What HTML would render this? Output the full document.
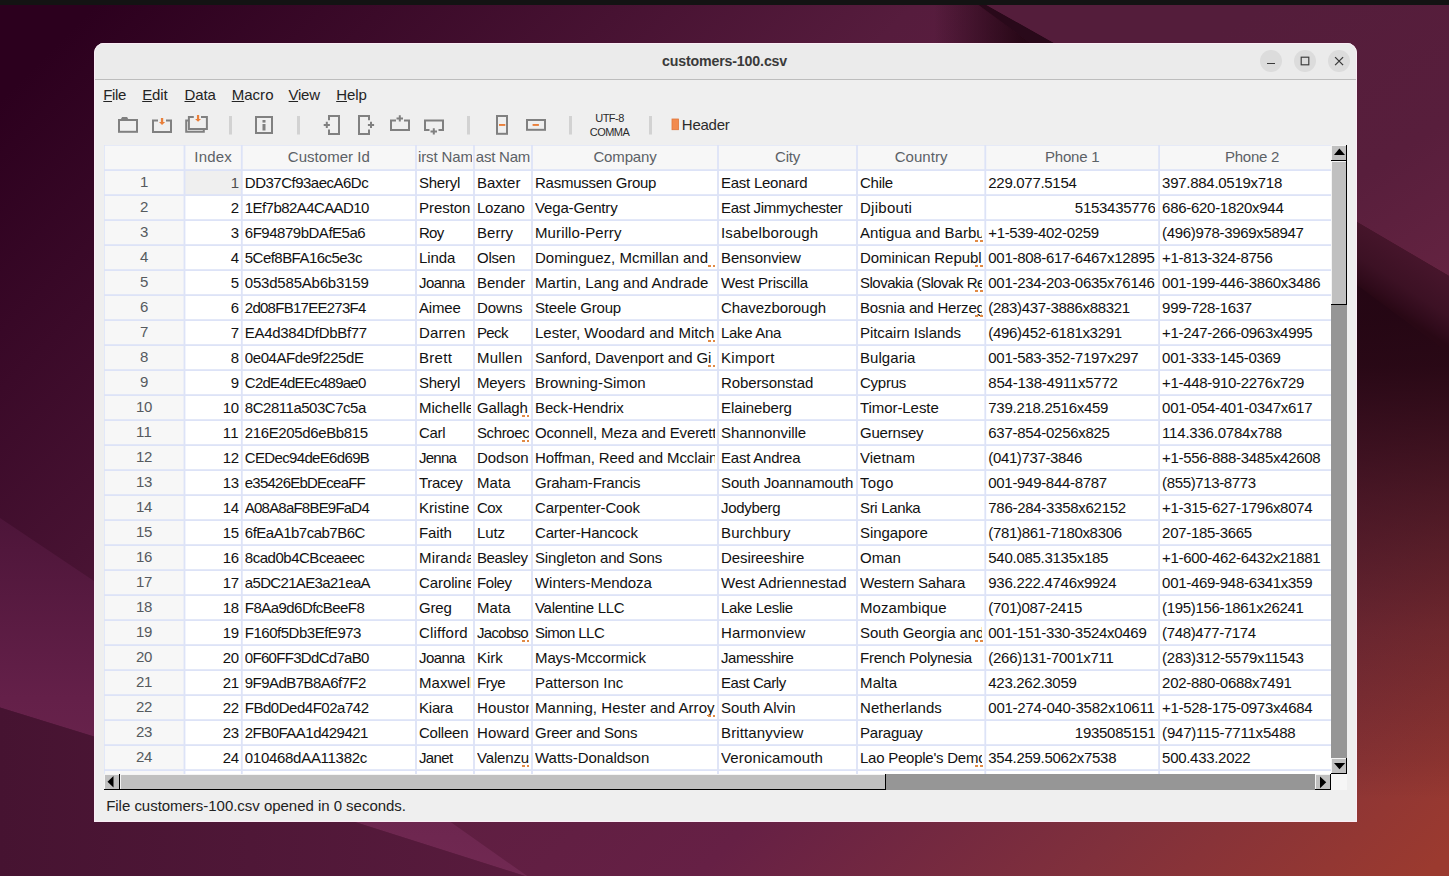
<!DOCTYPE html>
<html><head><meta charset="utf-8"><title>customers-100.csv</title>
<style>
html,body{margin:0;padding:0}
body{width:1449px;height:876px;overflow:hidden;position:relative;background:#3a0b29;font-family:"Liberation Sans",sans-serif;font-size:15px;color:#1a1a1a}
.abs{position:absolute}
#wall{position:absolute;left:0;top:0}
#topbar{position:absolute;left:0;top:0;width:1449px;height:5px;background:#131313}
#win{position:absolute;left:94px;top:43px;width:1263px;height:779px;background:#efefef;border-radius:10px 10px 0 0;overflow:hidden}
#title{position:absolute;left:0;top:0;width:1263px;height:35px;background:#ebebeb;border-bottom:1px solid #bdbdbd;border-top:1px solid #ebebeb;box-sizing:content-box}
#title .t{position:absolute;left:-1px;width:1263px;top:6.6px;text-align:center;font-weight:bold;font-size:14.2px;line-height:20px;color:#3a3a3a;letter-spacing:-0.15px}
.wb{position:absolute;top:6px;width:22px;height:22px;border-radius:11px;background:#dcdcdc}
.menu{position:absolute;top:41px;height:22px;line-height:22px;font-size:15px;color:#242424;white-space:pre}
.menu u{text-decoration:underline;text-underline-offset:1.3px;text-decoration-thickness:1px}
#tb{position:absolute;left:0;top:0}
.tl{position:absolute;color:#2b2b2b;white-space:pre}
#grid{position:absolute;left:10px;top:102px;width:1227px;height:629px;background:#fff;overflow:hidden}
.c{position:absolute;height:25px;line-height:25px;white-space:pre;overflow:hidden;color:#111}
.h{position:absolute;top:-1px;height:25px;line-height:25px;white-space:pre;overflow:hidden;color:#5c6166;text-align:center}
.rn{color:#555a5e;text-align:center}
.r{text-align:right}
#status{position:absolute;left:12.2px;top:753.2px;font-size:15px;line-height:20px;color:#222;white-space:pre}
</style></head><body>

<svg id="wall" width="1449" height="876" viewBox="0 0 1449 876">
<defs>
<linearGradient id="gb" gradientUnits="userSpaceOnUse" x1="0" y1="0" x2="1150" y2="1150">
<stop offset="0.043" stop-color="#2c001e"/><stop offset="0.40" stop-color="#561c3d"/><stop offset="0.684" stop-color="#662045"/><stop offset="0.848" stop-color="#80303c"/><stop offset="1" stop-color="#9b3a2f"/>
</linearGradient>
<linearGradient id="gT" gradientUnits="userSpaceOnUse" x1="1270" y1="0" x2="1449" y2="276">
<stop offset="0" stop-color="#541d3b"/><stop offset="0.6" stop-color="#581e3c"/><stop offset="1" stop-color="#642341"/>
</linearGradient>
<linearGradient id="gW" gradientUnits="userSpaceOnUse" x1="1400" y1="247" x2="1369" y2="294">
<stop offset="0" stop-color="#46152b"/><stop offset="0.55" stop-color="#3c1124"/><stop offset="0.85" stop-color="#300b1b"/><stop offset="1" stop-color="#290815"/>
</linearGradient>
<linearGradient id="gD" gradientUnits="userSpaceOnUse" x1="1400" y1="317" x2="1400" y2="800">
<stop offset="0" stop-color="#1f0410" stop-opacity="0.92"/><stop offset="0.10" stop-color="#1f0410" stop-opacity="0.88"/><stop offset="0.37" stop-color="#1f0410" stop-opacity="0.55"/><stop offset="0.646" stop-color="#1f0410" stop-opacity="0.26"/><stop offset="0.917" stop-color="#1f0410" stop-opacity="0.08"/><stop offset="1" stop-color="#1f0410" stop-opacity="0"/>
</linearGradient>
<linearGradient id="gDt" gradientUnits="userSpaceOnUse" x1="1022" y1="24" x2="934" y2="24">
<stop offset="0" stop-color="#1f0410" stop-opacity="0.85"/><stop offset="1" stop-color="#1f0410" stop-opacity="0"/>
</linearGradient>
<linearGradient id="gL" gradientUnits="userSpaceOnUse" x1="0" y1="518" x2="0" y2="878">
<stop offset="0" stop-color="#4d1539"/><stop offset="0.5" stop-color="#642049"/><stop offset="1" stop-color="#712952"/>
</linearGradient>
<linearGradient id="gA" gradientUnits="userSpaceOnUse" x1="0" y1="0" x2="500" y2="0">
<stop offset="0" stop-color="#461331"/><stop offset="1" stop-color="#581b3d"/>
</linearGradient>
</defs>
<rect width="1449" height="876" fill="url(#gb)"/>
<!-- dark fade left of edge 2 in top strip -->
<polygon points="900,0 974,0 1034,44 900,44" fill="url(#gDt)"/>
<!-- dark fade below edge 2 on right side -->
<polygon points="1340,268 1449,349 1449,876 1340,876" fill="url(#gD)"/>
<!-- wedge between edges -->
<polygon points="977.6,0 1054,43 1357,221.5 1449,275.5 1449,353 1357,285 972,0" fill="url(#gW)"/>
<polygon points="977.6,0 1054,43 1056,44.500 1032,44.500 972,0" fill="#29091a"/>
<!-- region above edge 1 -->
<polygon points="977.6,0 1449,0 1449,275.5 1357,221.5 1054,43" fill="url(#gT)"/>
<!-- light band lower-left -->
<polygon points="0,518 94,581 452,823 530,878 525,876 355,822 94,736.5 0,707.5" fill="url(#gL)"/>
<!-- below edge A -->
<polygon points="0,707.5 94,736.5 355,822 525,876 0,876" fill="url(#gA)"/>
</svg>
<div id="topbar"></div>

<div id="win">
<div id="title"><div class="t">customers-100.csv</div>
<div class="wb" style="left:1166px"></div>
<div class="wb" style="left:1200px"></div>
<div class="wb" style="left:1234px"></div>
<svg class="abs" style="left:1166px;top:6px" width="90" height="22" viewBox="0 0 90 22">
<path d="M7 13.500h8" stroke="#3a3a3a" stroke-width="1.1" fill="none"/>
<rect x="41.200" y="7.200" width="7.600" height="7.600" stroke="#3a3a3a" stroke-width="1.15" fill="none"/>
<path d="M75.100 7.100l8 8M83.100 7.100l-8 8" stroke="#3a3a3a" stroke-width="1.25" fill="none"/>
</svg>
</div>
<div class="menu" style="left:9.3px;letter-spacing:-0.406px"><u>F</u>ile</div>
<div class="menu" style="left:48.2px;letter-spacing:-0.155px"><u>E</u>dit</div>
<div class="menu" style="left:90.5px;letter-spacing:-0.121px"><u>D</u>ata</div>
<div class="menu" style="left:137.7px;letter-spacing:0.027px"><u>M</u>acro</div>
<div class="menu" style="left:194.6px;letter-spacing:-0.279px"><u>V</u>iew</div>
<div class="menu" style="left:242.2px;letter-spacing:-0.037px"><u>H</u>elp</div>
<svg id="tb" width="1263" height="110" viewBox="94 43 1263 110">
<g fill="none" stroke="#808080" stroke-width="2" stroke-linejoin="miter">
<!-- open folder -->
<rect x="119" y="120" width="18" height="11.800"/>
<!-- save -->
<path d="M158 120.5h-5V132h18v-11.500h-5"/>
<!-- save all -->
<path d="M193.800 117.100h-4.900V129h18v-11.900H201"/>
<path d="M188.500 120.400h-2.300V131.800h17.600V129.500"/>
<!-- info -->
<rect x="256" y="117" width="16" height="16"/>
<!-- insert col left -->
<path d="M329 120.300v-4.300h10v18h-10v-4.500"/>
<!-- insert col right -->
<path d="M369 120.300v-4.300h-10v18h10v-4.500"/>
<!-- insert row above -->
<path d="M396 120.500h-5v9.500h18v-9.500h-5"/>
<!-- insert row below -->
<path d="M429.500 130h-4.500v-9.500h18V130h-4.500"/>
<!-- delete col -->
<rect x="497" y="116" width="10" height="17.800"/>
<!-- delete row -->
<rect x="527" y="120" width="18" height="9.800"/>
</g>
<g stroke="#808080" stroke-width="2" fill="none">
<path d="M323.700 124.900h6.200M326.800 121.800v6.200"/>
<path d="M367.900 124.900h6.200M371 121.800v6.200"/>
<path d="M396.500 118.500h6.500M399.800 115.200v6.400"/>
<path d="M430.500 131.500h6.500M433.800 128.200v6.400"/>
</g>
<g fill="#808080"><path d="M120.400 119.700l1.700-2.800h5l1.500 2.800z"/><rect x="262.500" y="120" width="3" height="2.600"/><rect x="262.500" y="124" width="3" height="6.500"/></g>
<g fill="#e97f3a">
<path d="M160.900 117.900h2.300v4.100h1.900l-3.050 2.900-3.050-2.900h1.900z"/>
<path d="M196.950 115h2.200v4h1.900l-3 2.800-3-2.800h1.900z"/>
<rect x="499" y="124" width="6.300" height="1.900"/>
<rect x="532.600" y="124" width="6.300" height="1.900"/>
</g>
<g fill="#d2d2d2">
<rect x="229" y="116" width="3" height="18.500"/><rect x="297" y="116" width="3" height="18.500"/><rect x="467" y="116" width="3" height="18.500"/><rect x="569" y="116" width="3" height="18.500"/><rect x="649" y="116" width="3" height="18.500"/>
</g>
<rect x="672" y="119" width="6.500" height="10.700" fill="#f28a4e" stroke="#e0763a" stroke-width="0.8"/>
</svg>
<div class="tl" style="left:475.5px;top:68px;width:80px;text-align:center;font-size:11px;line-height:14px;letter-spacing:-0.55px">UTF-8
COMMA</div>
<div class="tl" style="left:587.8px;top:71.5px;font-size:15px;line-height:20px;letter-spacing:-0.247px">Header</div>
<div id="grid">
<div class="abs" style="left:0;top:0;width:1227px;height:25px;background:#f7f7f7"></div>
<div class="abs" style="left:0;top:0;width:80px;height:650px;background:#f7f7f7"></div>
<div class="abs" style="left:81px;top:26px;width:56px;height:24px;background:#efefef"></div>
<div class="h" style="left:82.3px;width:53.7px"><span style="display:inline-block;margin:0 -40px;letter-spacing:0.175px">Index</span></div>
<div class="h" style="left:139.6px;width:170.6px"><span style="display:inline-block;margin:0 -40px;letter-spacing:0.034px">Customer Id</span></div>
<div class="h" style="left:313.8px;width:54.4px"><span style="display:inline-block;margin:0 -40px;letter-spacing:-0.129px">First Name</span></div>
<div class="h" style="left:371.8px;width:54.4px"><span style="display:inline-block;margin:0 -40px;letter-spacing:-0.22px">Last Name</span></div>
<div class="h" style="left:429.8px;width:182.4px"><span style="display:inline-block;margin:0 -40px;letter-spacing:-0.156px">Company</span></div>
<div class="h" style="left:615.8px;width:135.4px"><span style="display:inline-block;margin:0 -40px;letter-spacing:-0.253px">City</span></div>
<div class="h" style="left:754.8px;width:124.7px"><span style="display:inline-block;margin:0 -40px;letter-spacing:0.063px">Country</span></div>
<div class="h" style="left:883.1px;width:170.2px"><span style="display:inline-block;margin:0 -40px;letter-spacing:-0.245px">Phone 1</span></div>
<div class="h" style="left:1056.9px;width:182.3px"><span style="display:inline-block;margin:0 -40px;letter-spacing:-0.245px">Phone 2</span></div>
<div class="c rn" style="left:0;width:80px;top:23.5px;letter-spacing:-0.279px">1</div>
<div class="c r" style="left:81.5px;width:53.4px;top:24.5px;letter-spacing:-0.279px;color:#4f4f4f">1</div>
<div class="c" style="left:140.8px;width:168.2px;top:24.5px;letter-spacing:-0.502px">DD37Cf93aecA6Dc</div>
<div class="c" style="left:315.0px;width:52.0px;top:24.5px;letter-spacing:-0.245px">Sheryl</div>
<div class="c" style="left:373.0px;width:52.0px;top:24.5px;letter-spacing:0.007px">Baxter</div>
<div class="c" style="left:431.0px;width:180.0px;top:24.5px;letter-spacing:-0.259px">Rasmussen Group</div>
<div class="c" style="left:617.0px;width:133.0px;top:24.5px;letter-spacing:-0.249px">East Leonard</div>
<div class="c" style="left:756.0px;width:122.3px;top:24.5px;letter-spacing:-0.267px">Chile</div>
<div class="c" style="left:884.3px;width:167.8px;top:24.5px;letter-spacing:-0.296px">229.077.5154</div>
<div class="c" style="left:1058.1px;width:168.9px;top:24.5px;letter-spacing:-0.277px">397.884.0519x718</div>
<div class="c rn" style="left:0;width:80px;top:48.5px;letter-spacing:-0.279px">2</div>
<div class="c r" style="left:81.5px;width:53.4px;top:49.5px;letter-spacing:-0.279px">2</div>
<div class="c" style="left:140.8px;width:168.2px;top:49.5px;letter-spacing:-0.569px">1Ef7b82A4CAAD10</div>
<div class="c" style="left:315.0px;width:52.0px;top:49.5px;letter-spacing:-0.044px">Preston</div>
<div class="c" style="left:373.0px;width:52.0px;top:49.5px;letter-spacing:-0.253px">Lozano</div>
<div class="c" style="left:431.0px;width:180.0px;top:49.5px;letter-spacing:-0.15px">Vega-Gentry</div>
<div class="c" style="left:617.0px;width:133.0px;top:49.5px;letter-spacing:-0.314px">East Jimmychester</div>
<div class="c" style="left:756.0px;width:122.3px;top:49.5px;letter-spacing:0.273px">Djibouti</div>
<div class="c r" style="left:882.3px;width:169.2px;top:49.5px;letter-spacing:-0.279px">5153435776</div>
<div class="c" style="left:1058.1px;width:168.9px;top:49.5px;letter-spacing:-0.285px">686-620-1820x944</div>
<div class="c rn" style="left:0;width:80px;top:73.5px;letter-spacing:-0.279px">3</div>
<div class="c r" style="left:81.5px;width:53.4px;top:74.5px;letter-spacing:-0.279px">3</div>
<div class="c" style="left:140.8px;width:168.2px;top:74.5px;letter-spacing:-0.48px">6F94879bDAfE5a6</div>
<div class="c" style="left:315.0px;width:52.0px;top:74.5px;letter-spacing:-0.732px">Roy</div>
<div class="c" style="left:373.0px;width:52.0px;top:74.5px;letter-spacing:0.022px">Berry</div>
<div class="c" style="left:431.0px;width:180.0px;top:74.5px;letter-spacing:0.124px">Murillo-Perry</div>
<div class="c" style="left:617.0px;width:133.0px;top:74.5px;letter-spacing:0.176px">Isabelborough</div>
<div class="c" style="left:756.0px;width:122.3px;top:74.5px;letter-spacing:0.023px">Antigua and Barbu</div>
<div class="abs" style="left:871.3px;top:94.9px;width:2.6px;height:2.6px;background:#e28a45"></div><div class="abs" style="left:876.1px;top:94.9px;width:2.6px;height:2.6px;background:#e28a45"></div>
<div class="c" style="left:884.3px;width:167.8px;top:74.5px;letter-spacing:-0.341px">+1-539-402-0259</div>
<div class="c" style="left:1058.1px;width:168.9px;top:74.5px;letter-spacing:-0.326px">(496)978-3969x58947</div>
<div class="c rn" style="left:0;width:80px;top:98.5px;letter-spacing:-0.279px">4</div>
<div class="c r" style="left:81.5px;width:53.4px;top:99.5px;letter-spacing:-0.279px">4</div>
<div class="c" style="left:140.8px;width:168.2px;top:99.5px;letter-spacing:-0.534px">5Cef8BFA16c5e3c</div>
<div class="c" style="left:315.0px;width:52.0px;top:99.5px;letter-spacing:-0.076px">Linda</div>
<div class="c" style="left:373.0px;width:52.0px;top:99.5px;letter-spacing:-0.223px">Olsen</div>
<div class="c" style="left:431.0px;width:180.0px;top:99.5px;letter-spacing:0.019px">Dominguez, Mcmillan and</div>
<div class="abs" style="left:604.0px;top:119.9px;width:2.6px;height:2.6px;background:#e28a45"></div><div class="abs" style="left:608.8px;top:119.9px;width:2.6px;height:2.6px;background:#e28a45"></div>
<div class="c" style="left:617.0px;width:133.0px;top:99.5px;letter-spacing:-0.123px">Bensonview</div>
<div class="c" style="left:756.0px;width:122.3px;top:99.5px;letter-spacing:-0.069px">Dominican Republ</div>
<div class="abs" style="left:871.3px;top:119.9px;width:2.6px;height:2.6px;background:#e28a45"></div><div class="abs" style="left:876.1px;top:119.9px;width:2.6px;height:2.6px;background:#e28a45"></div>
<div class="c" style="left:884.3px;width:167.8px;top:99.5px;letter-spacing:-0.291px">001-808-617-6467x12895</div>
<div class="c" style="left:1058.1px;width:168.9px;top:99.5px;letter-spacing:-0.341px">+1-813-324-8756</div>
<div class="c rn" style="left:0;width:80px;top:123.5px;letter-spacing:-0.279px">5</div>
<div class="c r" style="left:81.5px;width:53.4px;top:124.5px;letter-spacing:-0.279px">5</div>
<div class="c" style="left:140.8px;width:168.2px;top:124.5px;letter-spacing:-0.204px">053d585Ab6b3159</div>
<div class="c" style="left:315.0px;width:52.0px;top:124.5px;letter-spacing:-0.599px">Joanna</div>
<div class="c" style="left:373.0px;width:52.0px;top:124.5px;letter-spacing:-0.016px">Bender</div>
<div class="c" style="left:431.0px;width:180.0px;top:124.5px;letter-spacing:0.035px">Martin, Lang and Andrade</div>
<div class="c" style="left:617.0px;width:133.0px;top:124.5px;letter-spacing:-0.202px">West Priscilla</div>
<div class="c" style="left:756.0px;width:122.3px;top:124.5px;letter-spacing:-0.494px">Slovakia (Slovak Re</div>
<div class="abs" style="left:871.3px;top:144.9px;width:2.6px;height:2.6px;background:#e28a45"></div><div class="abs" style="left:876.1px;top:144.9px;width:2.6px;height:2.6px;background:#e28a45"></div>
<div class="c" style="left:884.3px;width:167.8px;top:124.5px;letter-spacing:-0.291px">001-234-203-0635x76146</div>
<div class="c" style="left:1058.1px;width:168.9px;top:124.5px;letter-spacing:-0.292px">001-199-446-3860x3486</div>
<div class="c rn" style="left:0;width:80px;top:148.5px;letter-spacing:-0.279px">6</div>
<div class="c r" style="left:81.5px;width:53.4px;top:149.5px;letter-spacing:-0.279px">6</div>
<div class="c" style="left:140.8px;width:168.2px;top:149.5px;letter-spacing:-0.735px">2d08FB17EE273F4</div>
<div class="c" style="left:315.0px;width:52.0px;top:149.5px;letter-spacing:-0.159px">Aimee</div>
<div class="c" style="left:373.0px;width:52.0px;top:149.5px;letter-spacing:-0.097px">Downs</div>
<div class="c" style="left:431.0px;width:180.0px;top:149.5px;letter-spacing:-0.2px">Steele Group</div>
<div class="c" style="left:617.0px;width:133.0px;top:149.5px;letter-spacing:-0.076px">Chavezborough</div>
<div class="c" style="left:756.0px;width:122.3px;top:149.5px;letter-spacing:-0.164px">Bosnia and Herzeg</div>
<div class="abs" style="left:871.3px;top:169.9px;width:2.6px;height:2.6px;background:#e28a45"></div><div class="abs" style="left:876.1px;top:169.9px;width:2.6px;height:2.6px;background:#e28a45"></div>
<div class="c" style="left:884.3px;width:167.8px;top:149.5px;letter-spacing:-0.326px">(283)437-3886x88321</div>
<div class="c" style="left:1058.1px;width:168.9px;top:149.5px;letter-spacing:-0.307px">999-728-1637</div>
<div class="c rn" style="left:0;width:80px;top:173.5px;letter-spacing:-0.279px">7</div>
<div class="c r" style="left:81.5px;width:53.4px;top:174.5px;letter-spacing:-0.279px">7</div>
<div class="c" style="left:140.8px;width:168.2px;top:174.5px;letter-spacing:-0.315px">EA4d384DfDbBf77</div>
<div class="c" style="left:315.0px;width:52.0px;top:174.5px;letter-spacing:0.109px">Darren</div>
<div class="c" style="left:373.0px;width:52.0px;top:174.5px;letter-spacing:-0.645px">Peck</div>
<div class="c" style="left:431.0px;width:180.0px;top:174.5px;letter-spacing:0.012px">Lester, Woodard and Mitch</div>
<div class="abs" style="left:604.0px;top:194.9px;width:2.6px;height:2.6px;background:#e28a45"></div><div class="abs" style="left:608.8px;top:194.9px;width:2.6px;height:2.6px;background:#e28a45"></div>
<div class="c" style="left:617.0px;width:133.0px;top:174.5px;letter-spacing:-0.31px">Lake Ana</div>
<div class="c" style="left:756.0px;width:122.3px;top:174.5px;letter-spacing:-0.045px">Pitcairn Islands</div>
<div class="c" style="left:884.3px;width:167.8px;top:174.5px;letter-spacing:-0.328px">(496)452-6181x3291</div>
<div class="c" style="left:1058.1px;width:168.9px;top:174.5px;letter-spacing:-0.313px">+1-247-266-0963x4995</div>
<div class="c rn" style="left:0;width:80px;top:198.5px;letter-spacing:-0.279px">8</div>
<div class="c r" style="left:81.5px;width:53.4px;top:199.5px;letter-spacing:-0.279px">8</div>
<div class="c" style="left:140.8px;width:168.2px;top:199.5px;letter-spacing:-0.426px">0e04AFde9f225dE</div>
<div class="c" style="left:315.0px;width:52.0px;top:199.5px;letter-spacing:0.287px">Brett</div>
<div class="c" style="left:373.0px;width:52.0px;top:199.5px;letter-spacing:0.209px">Mullen</div>
<div class="c" style="left:431.0px;width:180.0px;top:199.5px;letter-spacing:-0.084px">Sanford, Davenport and Gi</div>
<div class="abs" style="left:604.0px;top:219.9px;width:2.6px;height:2.6px;background:#e28a45"></div><div class="abs" style="left:608.8px;top:219.9px;width:2.6px;height:2.6px;background:#e28a45"></div>
<div class="c" style="left:617.0px;width:133.0px;top:199.5px;letter-spacing:0.282px">Kimport</div>
<div class="c" style="left:756.0px;width:122.3px;top:199.5px;letter-spacing:0.053px">Bulgaria</div>
<div class="c" style="left:884.3px;width:167.8px;top:199.5px;letter-spacing:-0.292px">001-583-352-7197x297</div>
<div class="c" style="left:1058.1px;width:168.9px;top:199.5px;letter-spacing:-0.311px">001-333-145-0369</div>
<div class="c rn" style="left:0;width:80px;top:223.5px;letter-spacing:-0.279px">9</div>
<div class="c r" style="left:81.5px;width:53.4px;top:224.5px;letter-spacing:-0.279px">9</div>
<div class="c" style="left:140.8px;width:168.2px;top:224.5px;letter-spacing:-0.732px">C2dE4dEEc489ae0</div>
<div class="c" style="left:315.0px;width:52.0px;top:224.5px;letter-spacing:-0.245px">Sheryl</div>
<div class="c" style="left:373.0px;width:52.0px;top:224.5px;letter-spacing:-0.121px">Meyers</div>
<div class="c" style="left:431.0px;width:180.0px;top:224.5px;letter-spacing:0.046px">Browning-Simon</div>
<div class="c" style="left:617.0px;width:133.0px;top:224.5px;letter-spacing:-0.103px">Robersonstad</div>
<div class="c" style="left:756.0px;width:122.3px;top:224.5px;letter-spacing:-0.242px">Cyprus</div>
<div class="c" style="left:884.3px;width:167.8px;top:224.5px;letter-spacing:-0.219px">854-138-4911x5772</div>
<div class="c" style="left:1058.1px;width:168.9px;top:224.5px;letter-spacing:-0.315px">+1-448-910-2276x729</div>
<div class="c rn" style="left:0;width:80px;top:248.5px;letter-spacing:-0.279px">10</div>
<div class="c r" style="left:81.5px;width:53.4px;top:249.5px;letter-spacing:-0.279px">10</div>
<div class="c" style="left:140.8px;width:168.2px;top:249.5px;letter-spacing:-0.474px">8C2811a503C7c5a</div>
<div class="c" style="left:315.0px;width:52.0px;top:249.5px;letter-spacing:0.007px">Michelle</div>
<div class="c" style="left:373.0px;width:52.0px;top:249.5px;letter-spacing:-0.137px">Gallagh</div>
<div class="abs" style="left:418.0px;top:269.9px;width:2.6px;height:2.6px;background:#e28a45"></div><div class="abs" style="left:422.8px;top:269.9px;width:2.6px;height:2.6px;background:#e28a45"></div>
<div class="c" style="left:431.0px;width:180.0px;top:249.5px;letter-spacing:-0.114px">Beck-Hendrix</div>
<div class="c" style="left:617.0px;width:133.0px;top:249.5px;letter-spacing:-0.091px">Elaineberg</div>
<div class="c" style="left:756.0px;width:122.3px;top:249.5px;letter-spacing:-0.071px">Timor-Leste</div>
<div class="c" style="left:884.3px;width:167.8px;top:249.5px;letter-spacing:-0.277px">739.218.2516x459</div>
<div class="c" style="left:1058.1px;width:168.9px;top:249.5px;letter-spacing:-0.292px">001-054-401-0347x617</div>
<div class="c rn" style="left:0;width:80px;top:273.5px;letter-spacing:0.276px">11</div>
<div class="c r" style="left:81.5px;width:53.4px;top:274.5px;letter-spacing:0.276px">11</div>
<div class="c" style="left:140.8px;width:168.2px;top:274.5px;letter-spacing:-0.368px">216E205d6eBb815</div>
<div class="c" style="left:315.0px;width:52.0px;top:274.5px;letter-spacing:-0.308px">Carl</div>
<div class="c" style="left:373.0px;width:52.0px;top:274.5px;letter-spacing:-0.391px">Schroec</div>
<div class="abs" style="left:418.0px;top:294.9px;width:2.6px;height:2.6px;background:#e28a45"></div><div class="abs" style="left:422.8px;top:294.9px;width:2.6px;height:2.6px;background:#e28a45"></div>
<div class="c" style="left:431.0px;width:180.0px;top:274.5px;letter-spacing:-0.149px">Oconnell, Meza and Everett</div>
<div class="c" style="left:617.0px;width:133.0px;top:274.5px;letter-spacing:-0.07px">Shannonville</div>
<div class="c" style="left:756.0px;width:122.3px;top:274.5px;letter-spacing:-0.21px">Guernsey</div>
<div class="c" style="left:884.3px;width:167.8px;top:274.5px;letter-spacing:-0.285px">637-854-0256x825</div>
<div class="c" style="left:1058.1px;width:168.9px;top:274.5px;letter-spacing:-0.207px">114.336.0784x788</div>
<div class="c rn" style="left:0;width:80px;top:298.5px;letter-spacing:-0.279px">12</div>
<div class="c r" style="left:81.5px;width:53.4px;top:299.5px;letter-spacing:-0.279px">12</div>
<div class="c" style="left:140.8px;width:168.2px;top:299.5px;letter-spacing:-0.658px">CEDec94deE6d69B</div>
<div class="c" style="left:315.0px;width:52.0px;top:299.5px;letter-spacing:-0.747px">Jenna</div>
<div class="c" style="left:373.0px;width:52.0px;top:299.5px;letter-spacing:-0.035px">Dodson</div>
<div class="c" style="left:431.0px;width:180.0px;top:299.5px;letter-spacing:-0.108px">Hoffman, Reed and Mcclain</div>
<div class="c" style="left:617.0px;width:133.0px;top:299.5px;letter-spacing:-0.218px">East Andrea</div>
<div class="c" style="left:756.0px;width:122.3px;top:299.5px;letter-spacing:0.026px">Vietnam</div>
<div class="c" style="left:884.3px;width:167.8px;top:299.5px;letter-spacing:-0.367px">(041)737-3846</div>
<div class="c" style="left:1058.1px;width:168.9px;top:299.5px;letter-spacing:-0.312px">+1-556-888-3485x42608</div>
<div class="c rn" style="left:0;width:80px;top:323.5px;letter-spacing:-0.279px">13</div>
<div class="c r" style="left:81.5px;width:53.4px;top:324.5px;letter-spacing:-0.279px">13</div>
<div class="c" style="left:140.8px;width:168.2px;top:324.5px;letter-spacing:-0.771px">e35426EbDEceaFF</div>
<div class="c" style="left:315.0px;width:52.0px;top:324.5px;letter-spacing:-0.302px">Tracey</div>
<div class="c" style="left:373.0px;width:52.0px;top:324.5px;letter-spacing:0.085px">Mata</div>
<div class="c" style="left:431.0px;width:180.0px;top:324.5px;letter-spacing:-0.221px">Graham-Francis</div>
<div class="c" style="left:617.0px;width:133.0px;top:324.5px;letter-spacing:-0.116px">South Joannamouth</div>
<div class="c" style="left:756.0px;width:122.3px;top:324.5px;letter-spacing:0.26px">Togo</div>
<div class="c" style="left:884.3px;width:167.8px;top:324.5px;letter-spacing:-0.311px">001-949-844-8787</div>
<div class="c" style="left:1058.1px;width:168.9px;top:324.5px;letter-spacing:-0.367px">(855)713-8773</div>
<div class="c rn" style="left:0;width:80px;top:348.5px;letter-spacing:-0.279px">14</div>
<div class="c r" style="left:81.5px;width:53.4px;top:349.5px;letter-spacing:-0.279px">14</div>
<div class="c" style="left:140.8px;width:168.2px;top:349.5px;letter-spacing:-0.784px">A08A8aF8BE9FaD4</div>
<div class="c" style="left:315.0px;width:52.0px;top:349.5px;letter-spacing:0.038px">Kristine</div>
<div class="c" style="left:373.0px;width:52.0px;top:349.5px;letter-spacing:-0.596px">Cox</div>
<div class="c" style="left:431.0px;width:180.0px;top:349.5px;letter-spacing:-0.131px">Carpenter-Cook</div>
<div class="c" style="left:617.0px;width:133.0px;top:349.5px;letter-spacing:-0.295px">Jodyberg</div>
<div class="c" style="left:756.0px;width:122.3px;top:349.5px;letter-spacing:-0.339px">Sri Lanka</div>
<div class="c" style="left:884.3px;width:167.8px;top:349.5px;letter-spacing:-0.284px">786-284-3358x62152</div>
<div class="c" style="left:1058.1px;width:168.9px;top:349.5px;letter-spacing:-0.313px">+1-315-627-1796x8074</div>
<div class="c rn" style="left:0;width:80px;top:373.5px;letter-spacing:-0.279px">15</div>
<div class="c r" style="left:81.5px;width:53.4px;top:374.5px;letter-spacing:-0.279px">15</div>
<div class="c" style="left:140.8px;width:168.2px;top:374.5px;letter-spacing:-0.505px">6fEaA1b7cab7B6C</div>
<div class="c" style="left:315.0px;width:52.0px;top:374.5px;letter-spacing:-0.138px">Faith</div>
<div class="c" style="left:373.0px;width:52.0px;top:374.5px;letter-spacing:-0.135px">Lutz</div>
<div class="c" style="left:431.0px;width:180.0px;top:374.5px;letter-spacing:-0.165px">Carter-Hancock</div>
<div class="c" style="left:617.0px;width:133.0px;top:374.5px;letter-spacing:0.134px">Burchbury</div>
<div class="c" style="left:756.0px;width:122.3px;top:374.5px;letter-spacing:-0.082px">Singapore</div>
<div class="c" style="left:884.3px;width:167.8px;top:374.5px;letter-spacing:-0.328px">(781)861-7180x8306</div>
<div class="c" style="left:1058.1px;width:168.9px;top:374.5px;letter-spacing:-0.307px">207-185-3665</div>
<div class="c rn" style="left:0;width:80px;top:398.5px;letter-spacing:-0.279px">16</div>
<div class="c r" style="left:81.5px;width:53.4px;top:399.5px;letter-spacing:-0.279px">16</div>
<div class="c" style="left:140.8px;width:168.2px;top:399.5px;letter-spacing:-0.478px">8cad0b4CBceaeec</div>
<div class="c" style="left:315.0px;width:52.0px;top:399.5px;letter-spacing:0.179px">Miranda</div>
<div class="c" style="left:373.0px;width:52.0px;top:399.5px;letter-spacing:-0.402px">Beasley</div>
<div class="c" style="left:431.0px;width:180.0px;top:399.5px;letter-spacing:-0.17px">Singleton and Sons</div>
<div class="c" style="left:617.0px;width:133.0px;top:399.5px;letter-spacing:-0.08px">Desireeshire</div>
<div class="c" style="left:756.0px;width:122.3px;top:399.5px;letter-spacing:-0.01px">Oman</div>
<div class="c" style="left:884.3px;width:167.8px;top:399.5px;letter-spacing:-0.277px">540.085.3135x185</div>
<div class="c" style="left:1058.1px;width:168.9px;top:399.5px;letter-spacing:-0.312px">+1-600-462-6432x21881</div>
<div class="c rn" style="left:0;width:80px;top:423.5px;letter-spacing:-0.279px">17</div>
<div class="c r" style="left:81.5px;width:53.4px;top:424.5px;letter-spacing:-0.279px">17</div>
<div class="c" style="left:140.8px;width:168.2px;top:424.5px;letter-spacing:-0.665px">a5DC21AE3a21eaA</div>
<div class="c" style="left:315.0px;width:52.0px;top:424.5px;letter-spacing:-0.095px">Caroline</div>
<div class="c" style="left:373.0px;width:52.0px;top:424.5px;letter-spacing:-0.412px">Foley</div>
<div class="c" style="left:431.0px;width:180.0px;top:424.5px;letter-spacing:-0.048px">Winters-Mendoza</div>
<div class="c" style="left:617.0px;width:133.0px;top:424.5px;letter-spacing:-0.009px">West Adriennestad</div>
<div class="c" style="left:756.0px;width:122.3px;top:424.5px;letter-spacing:-0.217px">Western Sahara</div>
<div class="c" style="left:884.3px;width:167.8px;top:424.5px;letter-spacing:-0.277px">936.222.4746x9924</div>
<div class="c" style="left:1058.1px;width:168.9px;top:424.5px;letter-spacing:-0.292px">001-469-948-6341x359</div>
<div class="c rn" style="left:0;width:80px;top:448.5px;letter-spacing:-0.279px">18</div>
<div class="c r" style="left:81.5px;width:53.4px;top:449.5px;letter-spacing:-0.279px">18</div>
<div class="c" style="left:140.8px;width:168.2px;top:449.5px;letter-spacing:-0.541px">F8Aa9d6DfcBeeF8</div>
<div class="c" style="left:315.0px;width:52.0px;top:449.5px;letter-spacing:-0.162px">Greg</div>
<div class="c" style="left:373.0px;width:52.0px;top:449.5px;letter-spacing:0.085px">Mata</div>
<div class="c" style="left:431.0px;width:180.0px;top:449.5px;letter-spacing:-0.285px">Valentine LLC</div>
<div class="c" style="left:617.0px;width:133.0px;top:449.5px;letter-spacing:-0.375px">Lake Leslie</div>
<div class="c" style="left:756.0px;width:122.3px;top:449.5px;letter-spacing:0.08px">Mozambique</div>
<div class="c" style="left:884.3px;width:167.8px;top:449.5px;letter-spacing:-0.367px">(701)087-2415</div>
<div class="c" style="left:1058.1px;width:168.9px;top:449.5px;letter-spacing:-0.326px">(195)156-1861x26241</div>
<div class="c rn" style="left:0;width:80px;top:473.5px;letter-spacing:-0.279px">19</div>
<div class="c r" style="left:81.5px;width:53.4px;top:474.5px;letter-spacing:-0.279px">19</div>
<div class="c" style="left:140.8px;width:168.2px;top:474.5px;letter-spacing:-0.483px">F160f5Db3EfE973</div>
<div class="c" style="left:315.0px;width:52.0px;top:474.5px;letter-spacing:0.208px">Clifford</div>
<div class="c" style="left:373.0px;width:52.0px;top:474.5px;letter-spacing:-0.694px">Jacobso</div>
<div class="abs" style="left:418.0px;top:494.9px;width:2.6px;height:2.6px;background:#e28a45"></div><div class="abs" style="left:422.8px;top:494.9px;width:2.6px;height:2.6px;background:#e28a45"></div>
<div class="c" style="left:431.0px;width:180.0px;top:474.5px;letter-spacing:-0.56px">Simon LLC</div>
<div class="c" style="left:617.0px;width:133.0px;top:474.5px;letter-spacing:0.109px">Harmonview</div>
<div class="c" style="left:756.0px;width:122.3px;top:474.5px;letter-spacing:-0.102px">South Georgia and</div>
<div class="abs" style="left:871.3px;top:494.9px;width:2.6px;height:2.6px;background:#e28a45"></div><div class="abs" style="left:876.1px;top:494.9px;width:2.6px;height:2.6px;background:#e28a45"></div>
<div class="c" style="left:884.3px;width:167.8px;top:474.5px;letter-spacing:-0.292px">001-151-330-3524x0469</div>
<div class="c" style="left:1058.1px;width:168.9px;top:474.5px;letter-spacing:-0.367px">(748)477-7174</div>
<div class="c rn" style="left:0;width:80px;top:498.5px;letter-spacing:-0.279px">20</div>
<div class="c r" style="left:81.5px;width:53.4px;top:499.5px;letter-spacing:-0.279px">20</div>
<div class="c" style="left:140.8px;width:168.2px;top:499.5px;letter-spacing:-0.686px">0F60FF3DdCd7aB0</div>
<div class="c" style="left:315.0px;width:52.0px;top:499.5px;letter-spacing:-0.599px">Joanna</div>
<div class="c" style="left:373.0px;width:52.0px;top:499.5px;letter-spacing:-0.031px">Kirk</div>
<div class="c" style="left:431.0px;width:180.0px;top:499.5px;letter-spacing:-0.108px">Mays-Mccormick</div>
<div class="c" style="left:617.0px;width:133.0px;top:499.5px;letter-spacing:-0.417px">Jamesshire</div>
<div class="c" style="left:756.0px;width:122.3px;top:499.5px;letter-spacing:-0.256px">French Polynesia</div>
<div class="c" style="left:884.3px;width:167.8px;top:499.5px;letter-spacing:-0.266px">(266)131-7001x711</div>
<div class="c" style="left:1058.1px;width:168.9px;top:499.5px;letter-spacing:-0.267px">(283)312-5579x11543</div>
<div class="c rn" style="left:0;width:80px;top:523.5px;letter-spacing:-0.279px">21</div>
<div class="c r" style="left:81.5px;width:53.4px;top:524.5px;letter-spacing:-0.279px">21</div>
<div class="c" style="left:140.8px;width:168.2px;top:524.5px;letter-spacing:-0.553px">9F9AdB7B8A6f7F2</div>
<div class="c" style="left:315.0px;width:52.0px;top:524.5px;letter-spacing:0.04px">Maxwell</div>
<div class="c" style="left:373.0px;width:52.0px;top:524.5px;letter-spacing:-0.429px">Frye</div>
<div class="c" style="left:431.0px;width:180.0px;top:524.5px;letter-spacing:-0.005px">Patterson Inc</div>
<div class="c" style="left:617.0px;width:133.0px;top:524.5px;letter-spacing:-0.445px">East Carly</div>
<div class="c" style="left:756.0px;width:122.3px;top:524.5px;letter-spacing:0.13px">Malta</div>
<div class="c" style="left:884.3px;width:167.8px;top:524.5px;letter-spacing:-0.296px">423.262.3059</div>
<div class="c" style="left:1058.1px;width:168.9px;top:524.5px;letter-spacing:-0.285px">202-880-0688x7491</div>
<div class="c rn" style="left:0;width:80px;top:548.5px;letter-spacing:-0.279px">22</div>
<div class="c r" style="left:81.5px;width:53.4px;top:549.5px;letter-spacing:-0.279px">22</div>
<div class="c" style="left:140.8px;width:168.2px;top:549.5px;letter-spacing:-0.479px">FBd0Ded4F02a742</div>
<div class="c" style="left:315.0px;width:52.0px;top:549.5px;letter-spacing:-0.204px">Kiara</div>
<div class="c" style="left:373.0px;width:52.0px;top:549.5px;letter-spacing:0.129px">Houston</div>
<div class="c" style="left:431.0px;width:180.0px;top:549.5px;letter-spacing:0.047px">Manning, Hester and Arroy</div>
<div class="abs" style="left:604.0px;top:569.9px;width:2.6px;height:2.6px;background:#e28a45"></div><div class="abs" style="left:608.8px;top:569.9px;width:2.6px;height:2.6px;background:#e28a45"></div>
<div class="c" style="left:617.0px;width:133.0px;top:549.5px;letter-spacing:-0.04px">South Alvin</div>
<div class="c" style="left:756.0px;width:122.3px;top:549.5px;letter-spacing:0.095px">Netherlands</div>
<div class="c" style="left:884.3px;width:167.8px;top:549.5px;letter-spacing:-0.241px">001-274-040-3582x10611</div>
<div class="c" style="left:1058.1px;width:168.9px;top:549.5px;letter-spacing:-0.313px">+1-528-175-0973x4684</div>
<div class="c rn" style="left:0;width:80px;top:573.5px;letter-spacing:-0.279px">23</div>
<div class="c r" style="left:81.5px;width:53.4px;top:574.5px;letter-spacing:-0.279px">23</div>
<div class="c" style="left:140.8px;width:168.2px;top:574.5px;letter-spacing:-0.524px">2FB0FAA1d429421</div>
<div class="c" style="left:315.0px;width:52.0px;top:574.5px;letter-spacing:-0.22px">Colleen</div>
<div class="c" style="left:373.0px;width:52.0px;top:574.5px;letter-spacing:0.13px">Howard</div>
<div class="c" style="left:431.0px;width:180.0px;top:574.5px;letter-spacing:-0.266px">Greer and Sons</div>
<div class="c" style="left:617.0px;width:133.0px;top:574.5px;letter-spacing:0.133px">Brittanyview</div>
<div class="c" style="left:756.0px;width:122.3px;top:574.5px;letter-spacing:-0.195px">Paraguay</div>
<div class="c r" style="left:882.3px;width:169.2px;top:574.5px;letter-spacing:-0.279px">1935085151</div>
<div class="c" style="left:1058.1px;width:168.9px;top:574.5px;letter-spacing:-0.205px">(947)115-7711x5488</div>
<div class="c rn" style="left:0;width:80px;top:598.5px;letter-spacing:-0.279px">24</div>
<div class="c r" style="left:81.5px;width:53.4px;top:599.5px;letter-spacing:-0.279px">24</div>
<div class="c" style="left:140.8px;width:168.2px;top:599.5px;letter-spacing:-0.289px">010468dAA11382c</div>
<div class="c" style="left:315.0px;width:52.0px;top:599.5px;letter-spacing:-0.637px">Janet</div>
<div class="c" style="left:373.0px;width:52.0px;top:599.5px;letter-spacing:-0.154px">Valenzu</div>
<div class="abs" style="left:418.0px;top:619.9px;width:2.6px;height:2.6px;background:#e28a45"></div><div class="abs" style="left:422.8px;top:619.9px;width:2.6px;height:2.6px;background:#e28a45"></div>
<div class="c" style="left:431.0px;width:180.0px;top:599.5px;letter-spacing:-0.016px">Watts-Donaldson</div>
<div class="c" style="left:617.0px;width:133.0px;top:599.5px;letter-spacing:0.15px">Veronicamouth</div>
<div class="c" style="left:756.0px;width:122.3px;top:599.5px;letter-spacing:-0.243px">Lao People's Demo</div>
<div class="abs" style="left:871.3px;top:619.9px;width:2.6px;height:2.6px;background:#e28a45"></div><div class="abs" style="left:876.1px;top:619.9px;width:2.6px;height:2.6px;background:#e28a45"></div>
<div class="c" style="left:884.3px;width:167.8px;top:599.5px;letter-spacing:-0.277px">354.259.5062x7538</div>
<div class="c" style="left:1058.1px;width:168.9px;top:599.5px;letter-spacing:-0.296px">500.433.2022</div>
<svg class="abs" style="left:0;top:0" width="1227" height="629" viewBox="104 145 1227 629"><g fill="#dde3f7"><rect x="104" y="145" width="1227" height="0.8" opacity="0.8"/><rect x="104" y="145" width="0.9" height="629" opacity="0.9"/><rect x="183.6" y="145" width="1.8" height="629"/><rect x="240.9" y="145" width="1.8" height="629"/><rect x="415.1" y="145" width="1.8" height="629"/><rect x="473.1" y="145" width="1.8" height="629"/><rect x="531.1" y="145" width="1.8" height="629"/><rect x="717.1" y="145" width="1.8" height="629"/><rect x="856.1" y="145" width="1.8" height="629"/><rect x="984.4" y="145" width="1.8" height="629"/><rect x="1158.2" y="145" width="1.8" height="629"/><rect x="104" y="169.2" width="1227" height="1.8"/><rect x="104" y="194.2" width="1227" height="1.8"/><rect x="104" y="219.2" width="1227" height="1.8"/><rect x="104" y="244.2" width="1227" height="1.8"/><rect x="104" y="269.2" width="1227" height="1.8"/><rect x="104" y="294.2" width="1227" height="1.8"/><rect x="104" y="319.2" width="1227" height="1.8"/><rect x="104" y="344.2" width="1227" height="1.8"/><rect x="104" y="369.2" width="1227" height="1.8"/><rect x="104" y="394.2" width="1227" height="1.8"/><rect x="104" y="419.2" width="1227" height="1.8"/><rect x="104" y="444.2" width="1227" height="1.8"/><rect x="104" y="469.2" width="1227" height="1.8"/><rect x="104" y="494.2" width="1227" height="1.8"/><rect x="104" y="519.2" width="1227" height="1.8"/><rect x="104" y="544.2" width="1227" height="1.8"/><rect x="104" y="569.2" width="1227" height="1.8"/><rect x="104" y="594.2" width="1227" height="1.8"/><rect x="104" y="619.2" width="1227" height="1.8"/><rect x="104" y="644.2" width="1227" height="1.8"/><rect x="104" y="669.2" width="1227" height="1.8"/><rect x="104" y="694.2" width="1227" height="1.8"/><rect x="104" y="719.2" width="1227" height="1.8"/><rect x="104" y="744.2" width="1227" height="1.8"/><rect x="104" y="769.2" width="1227" height="1.8"/><rect x="104" y="794.2" width="1227" height="1.8"/></g></svg>
</div>
<svg class="abs" style="left:0;top:0" width="1263" height="779" viewBox="94 43 1263 779">
<!-- vertical -->
<rect x="1331" y="145" width="16" height="629" fill="#969696"/>
<rect x="1331" y="145" width="16" height="159" fill="#c0c0c0"/>
<rect x="1331" y="145" width="1" height="159" fill="#f4f4f4"/>
<rect x="1331" y="145" width="15" height="1" fill="#f4f4f4"/>
<rect x="1331" y="161" width="15" height="1" fill="#f4f4f4"/>
<rect x="1346" y="145" width="1" height="160" fill="#000"/>
<rect x="1331" y="160" width="16" height="1" fill="#000"/>
<rect x="1331" y="304" width="16" height="1" fill="#000"/>
<polygon points="1339.4,148.600 1334,155 1345,155" fill="#000"/>
<rect x="1331" y="758" width="16" height="16" fill="#c0c0c0"/>
<rect x="1331" y="758" width="15" height="1" fill="#f4f4f4"/><rect x="1331" y="758" width="1" height="15" fill="#f4f4f4"/>
<rect x="1346" y="758" width="1" height="16" fill="#000"/><rect x="1331" y="773" width="16" height="1" fill="#000"/>
<polygon points="1334,763 1345.200,763 1339.500,769.300" fill="#000"/>
<!-- horizontal -->
<rect x="104" y="774" width="1227" height="16" fill="#969696"/>
<rect x="104" y="774" width="782" height="16" fill="#c0c0c0"/>
<rect x="104" y="774" width="781" height="1" fill="#f4f4f4"/><rect x="104" y="774" width="1" height="15" fill="#f4f4f4"/><rect x="120" y="774" width="1" height="15" fill="#f4f4f4"/>
<rect x="104" y="789" width="782" height="1" fill="#000"/>
<rect x="119" y="774" width="1" height="16" fill="#000"/>
<rect x="885" y="774" width="1" height="16" fill="#000"/>
<polygon points="107.500,781.700 113.500,776 113.500,787.500" fill="#000"/>
<rect x="1315" y="774" width="16" height="16" fill="#c0c0c0"/>
<rect x="1315" y="774" width="15" height="1" fill="#f4f4f4"/><rect x="1315" y="774" width="1" height="15" fill="#f4f4f4"/>
<rect x="1330" y="774" width="1" height="16" fill="#000"/><rect x="1315" y="789" width="16" height="1" fill="#000"/>
<polygon points="1320,776.500 1326.200,782.300 1320,788.200" fill="#000"/>
<rect x="1331" y="774" width="16" height="16" fill="#f6f6f6"/>
</svg>
<div class="abs" style="left:0;top:0;width:1263px;height:779px;box-sizing:border-box;border:1px solid rgba(252,236,246,0.9);border-radius:10px 10px 0 0"></div>
<div id="status" style="letter-spacing:-0.029px">File customers-100.csv opened in 0 seconds.</div>
</div>
</body></html>
